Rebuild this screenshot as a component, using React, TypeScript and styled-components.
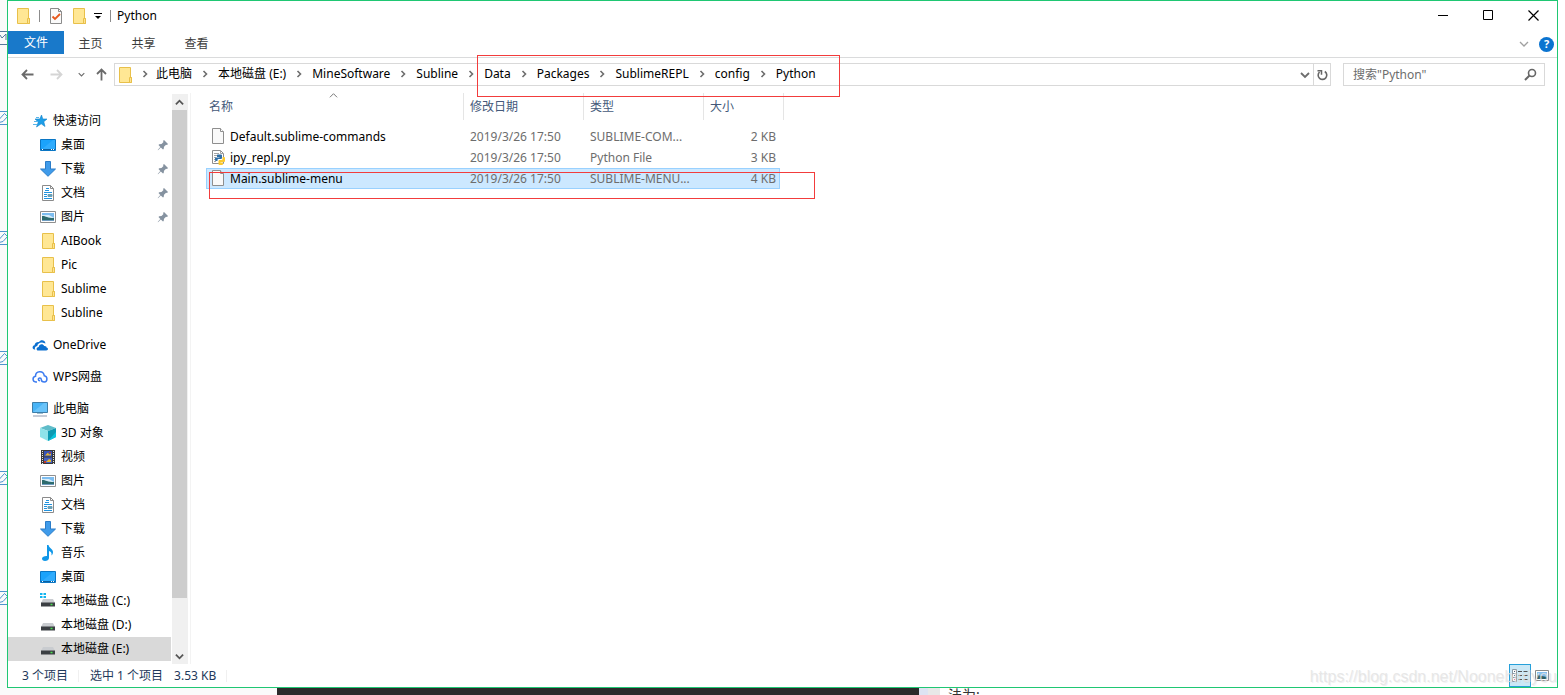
import React from "react";
import styled, { createGlobalStyle } from "styled-components";

const GlobalStyle = createGlobalStyle`
  * { box-sizing: border-box; }
  body { margin: 0; background: #fff; }
  button, input, table { font: inherit; color: inherit; }
  button { border: 0; background: none; padding: 0; cursor: default; }
  a { color: inherit; text-decoration: none; }
  svg { display: block; flex: none; }
`;

const Page = styled.div`
  min-height: 100vh;
  display: flex;
  flex-direction: column;
  overflow: hidden;
  font: 12px/16px "Noto Sans", "Noto Sans CJK SC", sans-serif;
  color: #000;
`;

const Desk = styled.div`
  flex: 1;
  display: grid;
  grid-template-columns: 7px minmax(0, 1fr) 7px;
`;

const Gutter = styled.div`
  background: #fafafa;
  display: flex;
  flex-direction: column;
  gap: 105px;
  padding-top: 111px;
`;

const GutterTop = styled.div`
  height: 14px;
  margin: -80px 0 -39px;
`;

const Window = styled.section`
  position: relative;
  display: flex;
  flex-direction: column;
  border: 1px solid #1fc773;
  background: #fff;
`;

const TitleBar = styled.header`
  height: 30px;
  display: flex;
  align-items: center;
  padding: 0 1px 0 7px;
`;

const QuickTools = styled.div`
  display: flex;
  align-items: center;
  gap: 8px;
  margin-right: 6px;
`;

const Rule = styled.span`
  width: 1px;
  height: 12px;
  background: #8c8c8c;
`;

const ToolButton = styled.button<{ $w?: number }>`
  width: ${(p) => p.$w ?? 15}px;
  height: 18px;
  display: flex;
  align-items: center;
  justify-content: center;
`;

const WindowTitle = styled.h1`
  margin: 0;
  font-size: 12px;
  font-weight: 400;
`;

const Spacer = styled.div`
  flex: 1;
`;

const WindowButton = styled.button`
  width: 45px;
  height: 30px;
  padding-bottom: 2px;
  display: grid;
  place-items: center;
`;

const Ribbon = styled.nav`
  height: 27px;
  display: flex;
  align-items: flex-start;
  border-bottom: 1px solid #dadbdc;
`;

const Tab = styled.button<{ $main?: boolean }>`
  width: ${(p) => (p.$main ? 56 : 53)}px;
  height: 23px;
  padding-top: ${(p) => (p.$main ? 0 : 2)}px;
  background: ${(p) => (p.$main ? "#1979ca" : "transparent")};
  color: ${(p) => (p.$main ? "#fff" : "#3c3c3c")};
`;

const RibbonTools = styled.div`
  display: flex;
  align-items: center;
  gap: 10px;
  height: 26px;
  margin-left: auto;
  padding-right: 3px;
`;

const HelpButton = styled.button`
  width: 15px;
  height: 15px;
  border-radius: 50%;
  background: #0b74d0;
  color: #fff;
  font-size: 11px;
  font-weight: 700;
  line-height: 14px;
`;

const NavRow = styled.div`
  display: flex;
  align-items: center;
  padding: 5px 12px 7px 12px;
`;

const NavArrows = styled.div`
  display: flex;
  align-items: center;
  width: 94px;
  gap: 14px;
`;

const AddressBox = styled.div`
  flex: 1;
  display: flex;
  align-items: center;
  height: 23px;
  border: 1px solid #d9d9d9;
  padding-left: 2px;
`;

const Crumbs = styled.ol`
  display: flex;
  flex: 1;
  margin: 0;
  padding: 0 0 2px;
  list-style: none;
`;

const CrumbSep = styled.span`
  width: 26px;
  display: grid;
  place-items: center;
`;

const Crumb = styled.li`
  display: flex;
  align-items: center;
  white-space: nowrap;
  &:first-child ${CrumbSep} { width: 23px; }
`;

const BoxButton = styled.button<{ $line?: boolean }>`
  width: 17px;
  height: 21px;
  display: grid;
  place-items: center;
  border-left: ${(p) => (p.$line ? "1px solid #d9d9d9" : "0")};
`;

const SearchBox = styled.label`
  display: flex;
  align-items: center;
  width: 202px;
  height: 23px;
  margin-left: 12px;
  padding: 0 7px 0 9px;
  border: 1px solid #d9d9d9;
`;

const SearchInput = styled.input`
  flex: 1;
  min-width: 0;
  border: 0;
  padding: 0;
  outline: 0;
  background: none;
  &::placeholder { color: #6d6d6d; opacity: 1; }
`;

const Body = styled.div`
  flex: 1;
  display: flex;
`;

const Tree = styled.nav`
  width: 163px;
  padding-top: 16px;
`;

const TreeGroup = styled.ul`
  margin: 0 0 8px;
  padding: 0;
  list-style: none;
  &:last-child { margin-bottom: 0; }
`;

const TreeItem = styled.li<{ $level: number; $selected?: boolean }>`
  display: flex;
  align-items: center;
  height: 24px;
  padding: 0 2px 0 ${(p) => (p.$level ? 32 : 24)}px;
  background: ${(p) => (p.$selected ? "#d9d9d9" : "transparent")};
`;

const TreeLink = styled.a`
  display: flex;
  flex: 1;
  align-items: center;
  gap: 5px;
  white-space: nowrap;
`;

const ScrollTrack = styled.div`
  width: 16px;
  margin: 1px 2px 0 1px;
  display: flex;
  flex-direction: column;
  background: #f0f0f0;
`;

const ScrollButton = styled.button`
  width: 15px;
  height: 16px;
  display: grid;
  place-items: center;
`;

const ScrollThumb = styled.div`
  width: 15px;
  flex: 488;
  background: #cdcdcd;
`;

const ScrollRest = styled.div`
  flex: 50;
`;

const Content = styled.main`
  flex: 1;
  border-left: 1px solid #f3f3f3;
  padding-left: 15px;
`;

const FileTable = styled.table`
  width: 578px;
  table-layout: fixed;
  border-collapse: separate;
  border-spacing: 0;
`;

const HeadCell = styled.th<{ $line?: boolean }>`
  position: relative;
  height: 27px;
  padding: 0 0 0 ${(p) => (p.$line === undefined ? 3 : 6)}px;
  border-right: ${(p) => (p.$line === false ? "0" : "1px solid #e5e5e5")};
  color: #44597a;
  font-weight: 400;
  text-align: left;
  &:last-child { padding: 0; }
`;

const SortMark = styled.span`
  position: absolute;
  left: 50%;
  top: -2px;
  margin-left: -6px;
`;

const Gap = styled.td`
  height: 6px;
  padding: 0;
`;

const Row = styled.tr<{ $selected?: boolean }>`
  color: #6d6d6d;
  & > td {
    height: 21px;
    padding: 0 0 0 6px;
    white-space: nowrap;
    border: 0 solid #99d1ff;
    background: ${(p) => (p.$selected ? "#cce8ff" : "transparent")};
    border-top-width: ${(p) => (p.$selected ? 1 : 0)}px;
    border-bottom-width: ${(p) => (p.$selected ? 1 : 0)}px;
  }
  & > td:first-child {
    color: #000;
    padding-left: ${(p) => (p.$selected ? 4 : 5)}px;
    border-left-width: ${(p) => (p.$selected ? 1 : 0)}px;
  }
  & > td:nth-child(4) {
    text-align: right;
    padding: 0 ${(p) => (p.$selected ? 3 : 4)}px 0 0;
    border-right-width: ${(p) => (p.$selected ? 1 : 0)}px;
  }
  & > td:last-child {
    padding: 0;
    border: 0;
    background: none;
  }
`;

const FileName = styled.a`
  display: flex;
  align-items: center;
  gap: 5px;
`;

const StatusBar = styled.footer`
  display: flex;
  align-items: center;
  height: 23px;
  padding-left: 14px;
  padding-right: 4px;
  color: #1e395b;
`;

const StatusPart = styled.span<{ $line?: boolean }>`
  height: 12px;
  line-height: 12px;
  margin-right: 11px;
  padding-right: ${(p) => (p.$line ? 10 : 0)}px;
  border-right: ${(p) => (p.$line ? "1px solid #f0f0f0" : "0")};
`;

const ViewButton = styled.button<{ $on?: boolean }>`
  width: 22px;
  height: 23px;
  display: grid;
  place-items: center;
  border: 1px solid ${(p) => (p.$on ? "#26a0da" : "transparent")};
  background: ${(p) => (p.$on ? "#cbe8f6" : "transparent")};
`;

const Watermark = styled.span`
  position: absolute;
  right: 0;
  bottom: 0;
  font: 16px/20px "Liberation Sans", sans-serif;
  color: rgba(226, 226, 226, 0.8);
  text-shadow: 1px 1px 0 rgba(150, 150, 150, 0.12);
  pointer-events: none;
`;

const PathMark = styled.div`
  position: absolute;
  left: 469px;
  top: 54px;
  width: 363px;
  height: 42px;
  border: 1px solid #f23c3c;
  pointer-events: none;
`;

const FileMark = styled(PathMark)`
  left: 201px;
  top: 171px;
  width: 606px;
  height: 27px;
`;

const Backdrop = styled.div`
  display: flex;
  height: 7px;
  overflow: hidden;
  background: #fff;
`;

const Strip = styled.div<{ $w: number; $bg: string }>`
  width: ${(p) => p.$w}px;
  background: ${(p) => p.$bg};
`;

const BackText = styled.div`
  padding-left: 8px;
  font-size: 14px;
  line-height: 14px;
  color: #333;
`;

const Folder = () => (
  <svg width="16" height="16" viewBox="0 0 16 16">
    <path d="M2.500.5h11v10h1v5h-12z" fill="#ffe794" stroke="#e8c04a" />
    <path d="M12.500 15.500v-5h2v5z" fill="#ffe391" stroke="#e8c04a" />
  </svg>
);

const CheckDoc = () => (
  <svg width="14" height="16" viewBox="0 0 14 16">
    <path d="M1.500.5h8l3 3v12h-11z" fill="#fafafa" stroke="#8b8b8b" />
    <path d="M9.500.5v3h3" fill="none" stroke="#8b8b8b" />
    <path d="M3.500 8.500l2.500 2.500 5-5" fill="none" stroke="#e8591c" strokeWidth="1.800" />
  </svg>
);

const QuickStar = () => (
  <svg width="16" height="16" viewBox="0 0 16 16">
    <path d="M9.500 2l1.300 4H15l-3.200 2.700L13 13.500 9.200 10.800 4.500 14l1.800-5L3 6h4.800z" fill="#1c9ee8" stroke="#1683c9" strokeWidth=".6" />
    <path d="M4 4.500h3M2 8.500h4M1 11.500h4" stroke="#58b5ea" />
  </svg>
);

const Desktop = () => (
  <svg width="16" height="16" viewBox="0 0 16 16">
    <path d="M.5 2.500h15v11H.5z" fill="#1ba3fb" stroke="#0a76c4" />
    <path d="M1 13L13 3h2v10z" fill="#45b6ff" opacity=".5" />
    <path d="M1 12.500h14" stroke="#0a5f9f" />
    <path d="M2 12.500h1M11 12.500h1M13 12.500h1" stroke="#fff" />
  </svg>
);

const Download = () => (
  <svg width="16" height="16" viewBox="0 0 16 16">
    <path d="M5.500.5h5v7.500h5L8 15.300.5 8h5z" fill="#3f9bea" stroke="#2a7cc8" />
  </svg>
);

const Doc = () => (
  <svg width="16" height="16" viewBox="0 0 16 16">
    <path d="M2.500.5h8l3 3v12h-11z" fill="#fff" stroke="#8b8b8b" />
    <path d="M10.500.5v3h3" fill="none" stroke="#8b8b8b" />
    <path d="M6 3.500h3M5 5.500h4M4 7.500h8M4 9.500h3M4 11.500h3M4 13.500h8" stroke="#2093e0" />
    <path d="M8 9.500h4v2H8z" fill="#5fa8b8" stroke="#6f9cb4" />
  </svg>
);

const Picture = () => (
  <svg width="16" height="16" viewBox="0 0 16 16">
    <path d="M.5 2.500h15v11H.5z" fill="#fff" stroke="#8f8f8f" />
    <path d="M2 4h12v8H2z" fill="#7dbdf0" />
    <path d="M2 6h7l5 3H2z" fill="#d8edf9" />
    <path d="M2 7c3-.5 5 2 12 2v3H2z" fill="#2d6b6d" />
    <path d="M2 11.500h12" stroke="#6f9cc0" />
  </svg>
);

const OneDrive = () => (
  <svg width="16" height="16" viewBox="0 0 16 16">
    <path d="M2.500 12.500C0 12 0 8.800 2.500 8.200 3 6 5 4.800 7 5.200 8.500 2.200 13 2.700 13.500 6.500L10 5.500C7 5.500 5.300 7.500 5.300 9c-2.500.5-3 2.500-2 3.500z" fill="#0a6fd0" />
    <path d="M6 13.500c-2-.3-2-3.300.7-3.500C7 6.800 11 6.200 12.200 9c2-.2 2.500 1 2.300 1.500 2 .3 2 3-.3 3z" fill="#0a6fd0" />
  </svg>
);

const WpsCloud = () => (
  <svg width="16" height="16" viewBox="0 0 16 16">
    <path d="M5 13H3.800C.2 12.500.2 8 3.500 7.300 3.500 1.500 11.500 1 12.300 6.800c3.500.5 3.500 5.900 0 6.200-2.300 0-3-1.200-3-2.500 0-2-3-2-3-.2 0 1 .7 1.500 1.700 1.500" fill="none" stroke="#3d7cf0" strokeWidth="1.500" />
  </svg>
);

const Computer = () => (
  <svg width="16" height="16" viewBox="0 0 16 16">
    <path d="M.5 1.500h15v10H.5z" fill="#49b4f6" stroke="#3e7ea8" />
    <path d="M1 11L12 2h3v9z" fill="#7fcdfb" opacity=".6" />
    <path d="M5 12.500h6" stroke="#9dbdd0" />
    <path d="M1 15h14" stroke="#8f9bb0" />
  </svg>
);

const Cube = () => (
  <svg width="16" height="16" viewBox="0 0 16 16">
    <path d="M0 3l8-3 8 3-8 3z" fill="#5fbcc9" />
    <path d="M0 3l8 3v10l-8-4z" fill="#8fe3ea" />
    <path d="M16 3L8 6v10l8-4z" fill="#0e9ab2" />
    <path d="M8 16l8-9v5z" fill="#0cc4dc" />
  </svg>
);

const Film = () => (
  <svg width="16" height="16" viewBox="0 0 16 16">
    <path d="M1 1h14v14H1z" fill="#3a3a3a" />
    <path d="M2.500 2v13M13.500 2v13" stroke="#e6e6e6" strokeDasharray="1 1" />
    <path d="M4 2h8v5.500H4z" fill="#3553b8" />
    <path d="M4 8.500h8V14H4z" fill="#4362c5" />
    <path d="M5 6.500l3-3 1 2 2-1v2zM6 13l3-3 2 1v2z" fill="#e9b72e" />
    <path d="M9 3h2v1H9zM4 12h2v2H4z" fill="#c0392b" />
  </svg>
);

const Music = () => (
  <svg width="16" height="16" viewBox="0 0 16 16">
    <path d="M7 0h1.500c.5 3 4.500 4 4.500 7 0 1.500-.5 2.500-1.500 3.500.5-3-1-4-2.500-4.500v7c0 2-2 3-4 3s-3-1-3-2.500S4.500 10.800 7 11z" fill="#1097e8" />
  </svg>
);

const Drive = ({ system }: { system?: boolean }) => (
  <svg width="16" height="16" viewBox="0 0 16 16">
    {system && <path d="M0 0h2.500v2H0zM3.500 0H6v2H3.500zM0 3h2.500v2H0zM3.500 3H6v2H3.500z" fill="#12b5f0" />}
    <path d="M3 6h10l2 4H1z" fill="#c9ccd0" />
    <path d="M1 9.500h14v4H1z" fill="#3b3f43" />
    <path d="M10.500 11.500h2" stroke="#49e04f" strokeWidth="1.500" />
  </svg>
);

const Pin = () => (
  <svg width="12" height="12" viewBox="0 0 12 12">
    <path d="M7 1l4 4-1 1-1-.3-2 2L6.700 10 6 10.500 3.800 8.500 1 11.300.7 11 3.300 8 1.500 6l.7-.8 2.300-.2 2-2L6 2z" fill="#8592a0" />
  </svg>
);

const BlankFile = () => (
  <svg width="14" height="18" viewBox="0 0 14 18">
    <path d="M1.500.5h8l3 3v12h-11z" fill="#f9f9f9" stroke="#8e8e8e" />
    <path d="M9.500.5v3h3" fill="#fff" stroke="#8e8e8e" />
  </svg>
);

const PyFile = () => (
  <svg width="14" height="18" viewBox="0 0 14 18">
    <path d="M1.500 1.500h8l3 3v10h-11z" fill="#fff" stroke="#8e8e8e" />
    <path d="M9.500 1.500v3h3M3 4.500h5M3 6.500h3M3 8.500h2M3 10.500h2M3 12.500h2" fill="none" stroke="#a5a5a5" />
    <path d="M6.500 5.500h3.500q1 0 1 1v2.500q0 1-1 1H7.500q-1 0-1 1v1H5q-1 0-1-1V9.500q0-1 1-1h3.500V8H6V6z" fill="#2f6ea5" />
    <path d="M11.500 8H13q1 0 1 1v3q0 1-1 1h-3.500v.5H12V15q0 1-1 1H8.500q-1 0-1-1v-3q0-1 1-1h2q1 0 1-1z" fill="#fbc92f" />
  </svg>
);

const Chevron = ({ d, c = "#6d6d6d", w = 1.6, s = 10 }: { d: "up" | "down" | "right"; c?: string; w?: number; s?: number }) => {
  const path = { up: "M1 7l4-4 4 4", down: "M1 3l4 4 4-4", right: "M3.500 2l3 3-3 3" }[d];
  return (
    <svg width={s} height={s} viewBox="0 0 10 10">
      <path d={path} fill="none" stroke={c} strokeWidth={w} />
    </svg>
  );
};

const Arrow = ({ d, c = "#6a6a6a" }: { d: "left" | "right" | "up"; c?: string }) => {
  const path = {
    left: "M12.500 6.500H1.500M6 2L1.500 6.500 6 11",
    right: "M.5 6.500h11M7 2l4.500 4.500L7 11",
    up: "M6.500 12.500V1.500M2 6l4.500-4.500L11 6",
  }[d];
  return (
    <svg width="13" height="13" viewBox="0 0 13 13">
      <path d={path} fill="none" stroke={c} strokeWidth="1.800" />
    </svg>
  );
};

const EditMark = () => (
  <svg width="7" height="15" viewBox="0 0 7 15">
    <path d="M0 .5h7M0 13.500h7" stroke="#4d94cd" />
    <path d="M-1 11.500l.5-3.500L4.500 2.500 7.500 5.500 3 10.500z" fill="none" stroke="#4d94cd" />
  </svg>
);

type Node = { label: string; icon: React.ReactNode; level: number; pinned?: boolean; selected?: boolean };

const tree: Node[][] = [
  [
    { label: "快速访问", icon: <QuickStar />, level: 0 },
    { label: "桌面", icon: <Desktop />, level: 1, pinned: true },
    { label: "下载", icon: <Download />, level: 1, pinned: true },
    { label: "文档", icon: <Doc />, level: 1, pinned: true },
    { label: "图片", icon: <Picture />, level: 1, pinned: true },
    { label: "AIBook", icon: <Folder />, level: 1 },
    { label: "Pic", icon: <Folder />, level: 1 },
    { label: "Sublime", icon: <Folder />, level: 1 },
    { label: "Subline", icon: <Folder />, level: 1 },
  ],
  [{ label: "OneDrive", icon: <OneDrive />, level: 0 }],
  [{ label: "WPS网盘", icon: <WpsCloud />, level: 0 }],
  [
    { label: "此电脑", icon: <Computer />, level: 0 },
    { label: "3D 对象", icon: <Cube />, level: 1 },
    { label: "视频", icon: <Film />, level: 1 },
    { label: "图片", icon: <Picture />, level: 1 },
    { label: "文档", icon: <Doc />, level: 1 },
    { label: "下载", icon: <Download />, level: 1 },
    { label: "音乐", icon: <Music />, level: 1 },
    { label: "桌面", icon: <Desktop />, level: 1 },
    { label: "本地磁盘 (C:)", icon: <Drive system />, level: 1 },
    { label: "本地磁盘 (D:)", icon: <Drive />, level: 1 },
    { label: "本地磁盘 (E:)", icon: <Drive />, level: 1, selected: true },
  ],
];

const crumbs = ["此电脑", "本地磁盘 (E:)", "MineSoftware", "Subline", "Data", "Packages", "SublimeREPL", "config", "Python"];

const files = [
  { name: "Default.sublime-commands", icon: <BlankFile />, type: "SUBLIME-COM...", size: "2 KB" },
  { name: "ipy_repl.py", icon: <PyFile />, type: "Python File", size: "3 KB" },
  { name: "Main.sublime-menu", icon: <BlankFile />, type: "SUBLIME-MENU...", size: "4 KB", selected: true },
];

export default function App() {
  return (
    <Page>
      <GlobalStyle />
      <Desk>
        <Gutter>
          <GutterTop>
            <svg width="7" height="14" viewBox="0 0 7 14">
              <path d="M0 .5h7M0 13.500h7" stroke="#56789b" />
              <path d="M0 4l2 3 4-4v6" fill="none" stroke="#56789b" />
            </svg>
          </GutterTop>
          {[0, 1, 2, 3, 4].map((n) => <EditMark key={n} />)}
        </Gutter>
        <Window>
          <TitleBar>
            <QuickTools>
              <Folder />
              <Rule />
              <ToolButton aria-label="属性"><CheckDoc /></ToolButton>
              <ToolButton aria-label="新建文件夹"><Folder /></ToolButton>
              <ToolButton $w={8} aria-label="自定义快速访问工具栏">
                <svg width="8" height="8" viewBox="0 0 8 8">
                  <path d="M0 1.500h8" stroke="#000" />
                  <path d="M1 4h6L4 7z" />
                </svg>
              </ToolButton>
              <Rule />
            </QuickTools>
            <WindowTitle>Python</WindowTitle>
            <Spacer />
            <WindowButton aria-label="最小化">
              <svg width="11" height="11" viewBox="0 0 11 11"><path d="M0 5.500h10" stroke="#000" /></svg>
            </WindowButton>
            <WindowButton aria-label="最大化">
              <svg width="11" height="11" viewBox="0 0 11 11"><path d="M.5.5h9v9h-9z" fill="none" stroke="#000" /></svg>
            </WindowButton>
            <WindowButton aria-label="关闭">
              <svg width="11" height="11" viewBox="0 0 11 11"><path d="M.5.5l10 10M10.500.5l-10 10" stroke="#000" strokeWidth="1.200" /></svg>
            </WindowButton>
          </TitleBar>
          <Ribbon>
            <Tab $main>文件</Tab>
            <Tab>主页</Tab>
            <Tab>共享</Tab>
            <Tab>查看</Tab>
            <RibbonTools>
              <ToolButton $w={10} aria-label="展开功能区"><Chevron d="down" c="#a0a0a0" w={1.3} /></ToolButton>
              <HelpButton aria-label="帮助">?</HelpButton>
            </RibbonTools>
          </Ribbon>
          <NavRow>
            <NavArrows>
              <ToolButton aria-label="返回"><Arrow d="left" /></ToolButton>
              <ToolButton aria-label="前进"><Arrow d="right" c="#d5d5d5" /></ToolButton>
              <ToolButton $w={6} aria-label="最近位置"><Chevron d="down" s={7} /></ToolButton>
              <ToolButton $w={6} aria-label="上移"><Arrow d="up" /></ToolButton>
            </NavArrows>
            <AddressBox>
              <Folder />
              <Crumbs>
                {crumbs.map((c) => (
                  <Crumb key={c}>
                    <CrumbSep><Chevron d="right" /></CrumbSep>
                    <a href="#">{c}</a>
                  </Crumb>
                ))}
              </Crumbs>
              <BoxButton aria-label="以前的位置"><Chevron d="down" w={1.8} /></BoxButton>
              <BoxButton $line aria-label="刷新">
                <svg width="12" height="12" viewBox="0 0 12 12">
                  <path d="M8.800 2.500A4.300 4.300 0 1 1 3.500 3" fill="none" stroke="#666" strokeWidth="1.600" />
                  <path d="M1.500 1.700h4v4" fill="none" stroke="#666" strokeWidth="1.500" />
                </svg>
              </BoxButton>
            </AddressBox>
            <SearchBox>
              <SearchInput type="text" aria-label="搜索" placeholder={'搜索"Python"'} />
              <svg width="13" height="13" viewBox="0 0 13 13">
                <circle cx="8" cy="5" r="3.500" fill="none" stroke="#666" strokeWidth="1.600" />
                <path d="M5.500 7.500L1 12" stroke="#666" strokeWidth="2" />
              </svg>
            </SearchBox>
          </NavRow>
          <Body>
            <Tree>
              {tree.map((group, i) => (
                <TreeGroup key={i}>
                  {group.map((n) => (
                    <TreeItem key={n.label} $level={n.level} $selected={n.selected}>
                      <TreeLink href="#">{n.icon}{n.label}</TreeLink>
                      {n.pinned && <Pin />}
                    </TreeItem>
                  ))}
                </TreeGroup>
              ))}
            </Tree>
            <ScrollTrack>
              <ScrollButton aria-label="向上滚动"><Chevron d="up" c="#555" w={2} s={9} /></ScrollButton>
              <ScrollThumb />
              <ScrollRest />
              <ScrollButton aria-label="向下滚动"><Chevron d="down" c="#555" w={2} s={9} /></ScrollButton>
            </ScrollTrack>
            <Content>
              <FileTable>
                <colgroup>
                  <col />
                  <col width="120" />
                  <col width="120" />
                  <col width="76" />
                  <col width="4" />
                </colgroup>
                <thead>
                  <tr>
                    <HeadCell>名称<SortMark><Chevron d="up" c="#777" w={1.1} s={9} /></SortMark></HeadCell>
                    <HeadCell $line>修改日期</HeadCell>
                    <HeadCell $line>类型</HeadCell>
                    <HeadCell $line={false}>大小</HeadCell>
                    <HeadCell $line aria-hidden="true" />
                  </tr>
                </thead>
                <tbody>
                  <tr><Gap colSpan={5} /></tr>
                  {files.map((f) => (
                    <Row key={f.name} $selected={f.selected}>
                      <td><FileName href="#">{f.icon}{f.name}</FileName></td>
                      <td>2019/3/26 17:50</td>
                      <td>{f.type}</td>
                      <td>{f.size}</td>
                      <td />
                    </Row>
                  ))}
                </tbody>
              </FileTable>
            </Content>
          </Body>
          <StatusBar>
            <StatusPart $line>3 个项目</StatusPart>
            <StatusPart>选中 1 个项目</StatusPart>
            <StatusPart $line>3.53 KB</StatusPart>
            <Spacer />
            <ViewButton $on aria-label="详细信息">
              <svg width="16" height="13" viewBox="0 0 16 13">
                <path d="M.5.5h4v12h-4zM.5 4.500h4M.5 8.500h4" fill="#fff" stroke="#8a9aa5" />
                <path d="M2 2.500h1M2 6.500h1" stroke="#444" />
                <path d="M2 10.500h1" stroke="#e33" />
                <path d="M6 2.500h4M11.500 2.500h4M6 6.500h4M11.500 6.500h4M6 10.500h4M11.500 10.500h4" stroke="#555" />
              </svg>
            </ViewButton>
            <ViewButton aria-label="大缩略图">
              <svg width="14" height="11" viewBox="0 0 14 11">
                <path d="M.5.5h13v10H.5z" fill="#fff" stroke="#8a8a8a" />
                <path d="M2 2h10v7H2z" fill="#84bff0" />
                <path d="M2 5l10 2v2H2z" fill="#2e5f66" />
              </svg>
            </ViewButton>
          </StatusBar>
          <PathMark />
          <FileMark />
          <Watermark>https://blog.csdn.net/Noonebirdyou</Watermark>
        </Window>
      </Desk>
      <Backdrop>
        <Strip $w={277} $bg="#fafafa" />
        <Strip $w={642} $bg="#2b2b2b" />
        <Strip $w={9} $bg="#dde3f2" />
        <Strip $w={12} $bg="#e8e8e8" />
        <BackText>法为:</BackText>
      </Backdrop>
    </Page>
  );
}
